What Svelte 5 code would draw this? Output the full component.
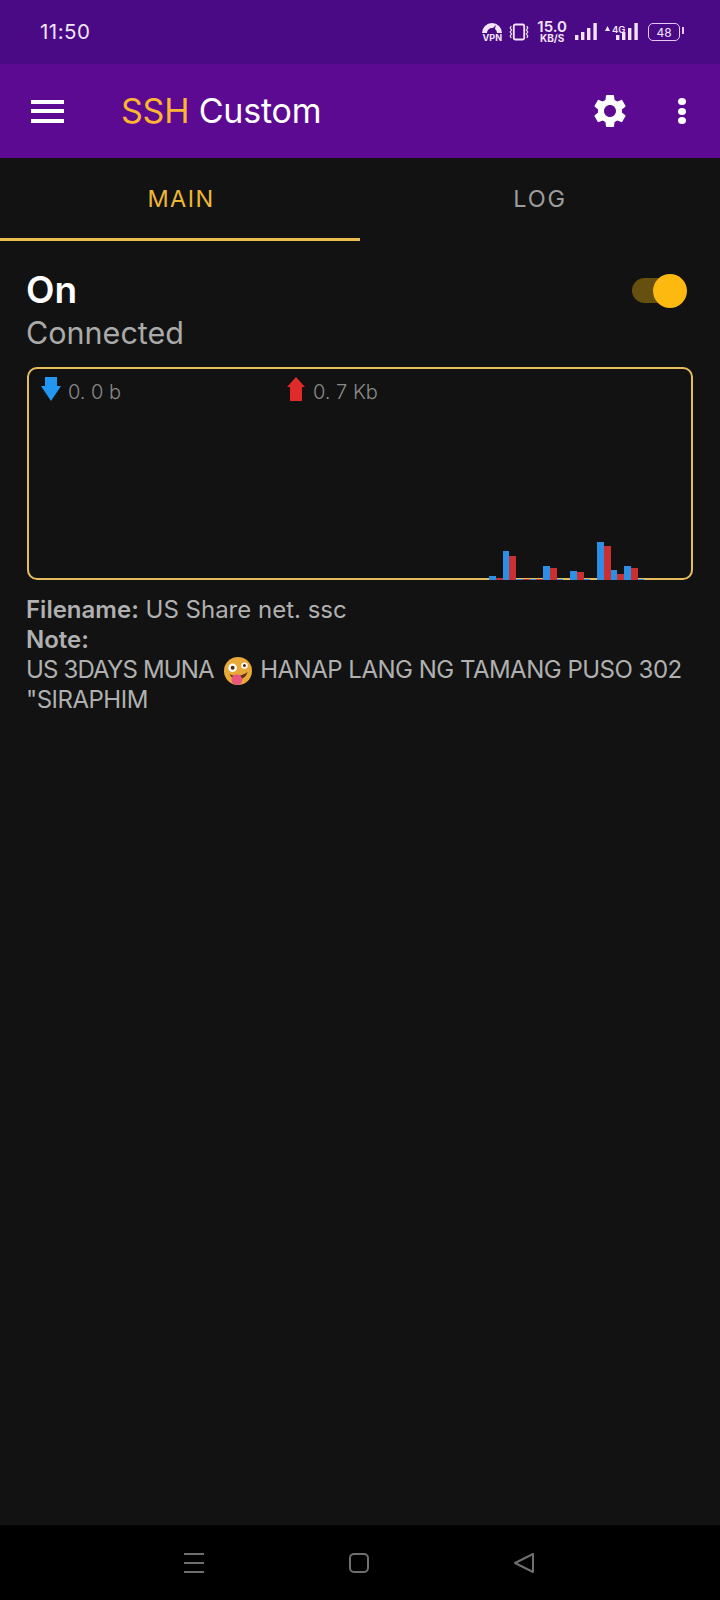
<script>
	const bars = [
		[4, 2], [29, 24], [1, 1], [1, 1], [14, 12], [1, 0], [9, 8], [1, 0], [38, 34], [10, 6], [14, 12], [1, 0]
	];
</script>

<div class="page">
	<div class="status">
		<span class="time">11:50</span>
		<div class="status__icons">
			<div class="vpn">
				<svg width="20" height="11" viewBox="0 0 20 11"><path d="M0 11a10 10 0 0 1 20 0h-5a5 5 0 0 0-10 0z" fill="#f3e4fb" /><path d="M8 9l6-6-2 7z" fill="#4a0a85" /></svg>
				<span>VPN</span>
			</div>
			<svg class="vibrate" width="20" height="18" viewBox="0 0 20 18" fill="none" stroke="#f3e4fb">
				<rect x="4.8" y="1.5" width="10.4" height="15" rx="1.5" stroke-width="1.8" />
				<path d="M2.2 3l-1 2 1.400 2-1.400 2 1.400 2-1.400 2 1 2M17.800 3l1 2-1.400 2 1.400 2-1.400 2 1.400 2-1 2" stroke-width="1.200" />
			</svg>
			<div class="speed">
				<b>15.0</b>
				<span>KB/S</span>
			</div>
			<svg class="signal" width="22" height="18" viewBox="0 0 22 18" fill="#f3e4fb">
				<rect x="0" y="12" width="3.4" height="5" /><rect x="6" y="9" width="3.4" height="8" /><rect x="12" y="5" width="3.4" height="12" /><rect x="18.4" y="0" width="3.4" height="17" />
			</svg>
			<div class="signal4g">
				<svg class="signal4g__up" width="5" height="5" viewBox="0 0 5 5" fill="#f3e4fb"><path d="M2.500 0L5 5H0z" /></svg>
				<span>4G</span>
				<svg width="22" height="18" viewBox="0 0 22 18" fill="#f3e4fb">
					<rect x="0" y="12" width="3.4" height="5" /><rect x="6" y="9" width="3.4" height="8" /><rect x="12" y="5" width="3.4" height="12" /><rect x="18.4" y="0" width="3.4" height="17" />
				</svg>
			</div>
			<div class="battery"><span>48</span></div>
		</div>
	</div>

	<header class="toolbar">
		<div class="menu"><i></i><i></i><i></i></div>
		<h1><span>SSH</span> Custom</h1>
		<svg class="gear" width="40" height="40" viewBox="0 0 24 24" fill="#fff">
			<path d="M19.14 12.94c.04-.3.06-.61.06-.94 0-.32-.02-.64-.07-.94l2.03-1.58c.18-.14.23-.41.12-.61l-1.92-3.32c-.12-.22-.37-.29-.59-.22l-2.39.96c-.5-.38-1.03-.7-1.62-.94l-.36-2.54c-.04-.24-.24-.41-.48-.41h-3.84c-.24 0-.43.17-.47.41l-.36 2.54c-.59.24-1.13.57-1.62.94l-2.39-.96c-.22-.08-.47 0-.59.22L2.74 8.87c-.12.21-.08.47.12.61l2.03 1.58c-.05.3-.09.63-.09.94s.02.64.07.94l-2.03 1.58c-.18.14-.23.41-.12.61l1.92 3.32c.12.22.37.29.59.22l2.39-.96c.5.38 1.03.7 1.62.94l.36 2.54c.05.24.24.41.48.41h3.84c.24 0 .44-.17.47-.41l.36-2.54c.59-.24 1.13-.56 1.62-.94l2.39.96c.22.08.47 0 .59-.22l1.92-3.32c.12-.22.07-.47-.12-.61l-2.01-1.58zM12 15.6c-1.98 0-3.6-1.62-3.6-3.6s1.62-3.6 3.6-3.6 3.6 1.62 3.6 3.6-1.62 3.6-3.6 3.6z" />
		</svg>
		<div class="more"><i></i><i></i><i></i></div>
	</header>

	<nav class="tabs">
		<div class="tab tab--active">MAIN</div>
		<div class="tab">LOG</div>
	</nav>

	<main class="content">
		<div class="state">
			<div>
				<div class="state__on">On</div>
				<div class="state__sub">Connected</div>
			</div>
			<div class="switch"><i></i></div>
		</div>

		<div class="graph">
			<div class="graph__legend">
				<div class="legend legend--down">
					<svg width="20" height="24" viewBox="0 0 20 24"><path d="M4 0h12v9h4L10 24 0 9h4z" fill="#2196f3" /></svg>
					<span>0. 0 b</span>
				</div>
				<div class="legend legend--up">
					<svg width="20" height="24" viewBox="0 0 20 24"><path d="M4 24h12V10h3L10 0 1 10h3z" fill="#e02b2b" /></svg>
					<span>0. 7 Kb</span>
				</div>
			</div>
			<div class="graph__bars">
				{#each bars as b}
					<div class="pair">
						<i class="blue" style="height: {b[0]}px"></i>
						<i class="red" style="height: {b[1]}px"></i>
					</div>
				{/each}
			</div>
		</div>

		<div class="info">
			<div><b>Filename:</b> US Share net. ssc</div>
			<div><b>Note:</b></div>
			<div class="note">
				<span class="note__lead">US 3DAYS MUNA</span>
				<svg class="emoji" width="28" height="28" viewBox="1 1 26 26">
					<circle cx="14" cy="14" r="13" fill="#e8a93a" />
					<circle cx="9" cy="11" r="4" fill="#fff" /><circle cx="9" cy="11" r="1.8" fill="#4a2c10" />
					<circle cx="20" cy="9" r="3" fill="#fff" /><circle cx="20" cy="9" r="1.4" fill="#4a2c10" />
					<path d="M6 17q8 4 17-2q-2 6-8 7q-6 0-9-5z" fill="#5a3212" />
					<ellipse cx="13" cy="22" rx="5" ry="5" fill="#e8557f" />
				</svg>
				HANAP LANG NG TAMANG PUSO 302<br />"SIRAPHIM
			</div>
		</div>
	</main>

	<footer class="navbar">
		<div class="nav-menu"><i></i><i></i><i></i></div>
		<div class="nav-home"></div>
		<svg width="20" height="20" viewBox="0 0 20 20" fill="none" stroke="#6f6f6f" stroke-width="2" stroke-linejoin="round"><path d="M19 1v18L1 10z" /></svg>
	</footer>
</div>

<style>
	:global(body) {
		background: #121212;
	}
	.page {
		width: 720px;
		height: 1600px;
		display: flex;
		flex-direction: column;
		background: #121212;
		font-family: Inter, 'Liberation Sans', sans-serif;
	}
	.status {
		height: 64px;
		flex: none;
		display: flex;
		align-items: center;
		justify-content: space-between;
		padding: 0 40px;
		background: #4a0a85;
		color: #f3e4fb;
	}
	.time {
		font-size: 20.5px;
		letter-spacing: 0.5px;
		margin-bottom: 2px;
	}
	.status__icons {
		display: flex;
		align-items: center;
		gap: 8px;
	}
	.vpn {
		display: flex;
		flex-direction: column;
		align-items: center;
		font-size: 9px;
		font-weight: 700;
		line-height: 9px;
		width: 20px;
	}
	.vibrate {
		margin-left: -1px;
	}
	.speed {
		display: flex;
		flex-direction: column;
		align-items: center;
		line-height: 11px;
	}
	.speed b {
		font-size: 15px;
		font-weight: 600;
		line-height: 12px;
	}
	.speed span {
		font-size: 10px;
		font-weight: 700;
	}
	.signal4g {
		position: relative;
		padding-left: 11px;
	}
	.signal4g span {
		position: absolute;
		left: 7px;
		top: 1px;
		font-size: 9.5px;
		font-weight: 600;
	}
	.signal4g__up {
		position: absolute;
		left: 0;
		top: 3px;
	}
	.signal4g svg {
		display: block;
	}
	.battery {
		width: 30px;
		height: 16px;
		margin-left: 2px;
		border: 1.6px solid #e6c8f2;
		border-radius: 5px;
		display: flex;
		align-items: center;
		justify-content: center;
		font-size: 12px;
		position: relative;
	}
	.battery::after {
		content: '';
		position: absolute;
		right: -5px;
		top: 3px;
		width: 2px;
		height: 7px;
		background: #e6c8f2;
	}
	.toolbar {
		height: 94px;
		flex: none;
		display: flex;
		align-items: center;
		padding: 0 31px;
		background: #5c0a91;
		color: #fff;
	}
	.menu {
		width: 33px;
		height: 23px;
		display: flex;
		flex-direction: column;
		justify-content: space-between;
	}
	.menu i {
		height: 4px;
		background: #fff;
	}
	h1 {
		margin: 0 0 2px 57px;
		font-size: 34px;
		font-weight: 400;
		flex: 1;
		letter-spacing: -0.2px;
	}
	h1 span {
		color: #fdb631;
	}
	.gear {
		margin-right: 48px;
	}
	.more {
		height: 26px;
		width: 8px;
		margin-right: 3px;
		display: flex;
		flex-direction: column;
		justify-content: space-between;
	}
	.more i {
		width: 8px;
		height: 7px;
		border-radius: 50%;
		background: #fff;
	}
	.tabs {
		height: 83px;
		flex: none;
		display: flex;
	}
	.tab {
		width: 50%;
		flex: none;
		display: flex;
		align-items: center;
		justify-content: center;
		font-size: 23.5px;
		letter-spacing: 1.8px;
		color: #9c9c9c;
		box-sizing: border-box;
		border-bottom: 3px solid transparent;
	}
	.tab--active {
		color: #eeb735;
		letter-spacing: 1.4px;
		padding-left: 2px;
		border-bottom-color: #e8bd4e;
	}
	.content {
		flex: 1;
		padding: 29px 27px 0;
	}
	.state {
		display: flex;
		justify-content: space-between;
		align-items: flex-start;
		margin-left: -1px;
	}
	.state__on {
		font-size: 37px;
		line-height: 40px;
		font-weight: 600;
		color: #fff;
	}
	.state__sub {
		font-size: 30.5px;
		line-height: 44px;
		color: #aaa;
		margin-top: 1px;
	}
	.switch {
		width: 39px;
		height: 25px;
		margin: 8px 22px 0 0;
		position: relative;
		border-radius: 13px;
		background: #66500f;
	}
	.switch i {
		position: absolute;
		top: -4px;
		right: -16px;
		width: 34px;
		height: 34px;
		border-radius: 50%;
		background: #fdb90f;
	}
	.graph {
		position: relative;
		height: 209px;
		margin: 12px 0 15px;
		border: 2px solid #e6bd5c;
		border-radius: 10px;
	}
	.graph__legend {
		display: flex;
		padding: 8px 0 0 12px;
	}
	.legend {
		display: flex;
		align-items: flex-start;
		gap: 7px;
		color: #8a8a8a;
		font-size: 20px;
		font-weight: 300;
	}
	.legend span {
		margin-top: 3px;
	}
	.legend--down {
		width: 245px;
	}
	.graph__bars {
		position: absolute;
		left: 460px;
		bottom: -2px;
		display: flex;
		align-items: flex-end;
	}
	.pair {
		width: 13.5px;
		display: flex;
		align-items: flex-end;
	}
	.pair i {
		width: 7px;
	}
	.blue {
		background: #2d8ee6;
	}
	.red {
		background: #c9302f;
	}
	.info {
		font-size: 24px;
		line-height: 30px;
		color: #b0b0b0;
		margin-left: -1px;
	}
	.info b {
		font-weight: 600;
	}
	.note {
		letter-spacing: -0.5px;
	}
	.note__lead {
		letter-spacing: -0.85px;
	}
	.emoji {
		vertical-align: -7px;
		margin: 0 2px 0 4px;
	}
	.navbar {
		height: 75px;
		flex: none;
		background: #000;
		display: flex;
		align-items: center;
		justify-content: center;
		gap: 145px;
		padding-right: 2px;
		box-sizing: border-box;
	}
	.nav-menu {
		width: 20px;
		height: 20px;
		display: flex;
		flex-direction: column;
		justify-content: space-between;
	}
	.nav-menu i {
		height: 2px;
		background: #6f6f6f;
	}
	.nav-home {
		width: 16px;
		height: 16px;
		border: 2px solid #6f6f6f;
		border-radius: 5px;
	}
</style>
